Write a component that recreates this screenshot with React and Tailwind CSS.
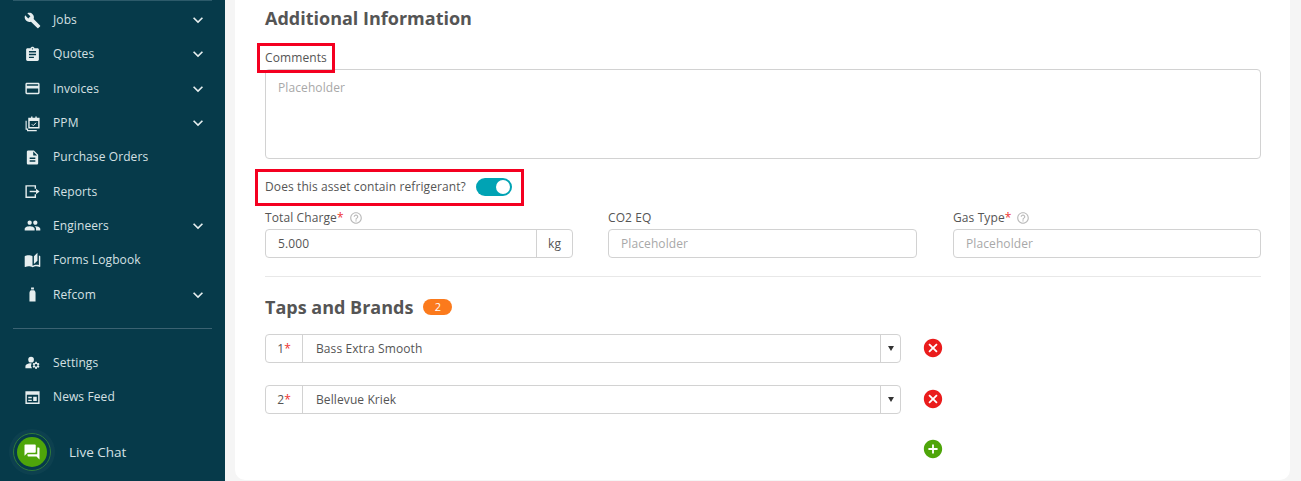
import React from 'react';
import {
  MdBuild,
  MdAssignment,
  MdOutlineCreditCard,
  MdDescription,
  MdPeople,
  MdAutoStories,
  MdManageAccounts,
  MdForum,
  MdHelpOutline,
  MdCancel,
  MdAddCircle,
  MdKeyboardArrowDown,
} from 'react-icons/md';

const PpmIcon = ({ className }) => (
  <svg viewBox="0 0 24 24" className={className} fill="none" stroke="currentColor" strokeWidth="2">
    <path d="M3 8v12h2v2h13" strokeWidth="1.6" />
    <path d="M7 5h14v13H7z" />
    <path d="M7 7h14" strokeWidth="3" />
    <path d="M11 2v3M17 2v3" />
    <path d="M11 13l2 2 4-4" strokeWidth="1.4" />
  </svg>
);

const BottleIcon = ({ className }) => (
  <svg viewBox="0 0 24 24" className={className} fill="currentColor">
    <path d="M10 2h4v3h-4zM9.5 6h5c1.2 1 1.8 2.2 1.8 3.5V22H7.7V9.5C7.7 8.2 8.3 7 9.5 6z" />
  </svg>
);

const ReportsIcon = ({ className }) => (
  <svg viewBox="0 0 24 24" className={className} fill="none" stroke="currentColor" strokeWidth="2">
    <path d="M16 8V4H3v16h13v-4" />
    <path d="M8 12h10" />
    <path d="M17 8l5 4-5 4z" fill="currentColor" stroke="none" />
  </svg>
);

const NewsIcon = ({ className }) => (
  <svg viewBox="0 0 24 24" className={className} fill="currentColor">
    <path d="M2 3h20v18H2zM4 8v11h16V8z" fillRule="evenodd" />
    <path d="M6 11h5v2H6zM6 15h5v2H6zM13 11h5v6h-5z" />
  </svg>
);

const navItems = [
  { label: 'Jobs', icon: MdBuild, arrow: true },
  { label: 'Quotes', icon: MdAssignment, arrow: true },
  { label: 'Invoices', icon: MdOutlineCreditCard, arrow: true },
  { label: 'PPM', icon: PpmIcon, arrow: true },
  { label: 'Purchase Orders', icon: MdDescription },
  { label: 'Reports', icon: ReportsIcon },
  { label: 'Engineers', icon: MdPeople, arrow: true },
  { label: 'Forms Logbook', icon: MdAutoStories },
  { label: 'Refcom', icon: BottleIcon, arrow: true },
];

const NavRow = ({ item }) => {
  const Icon = item.icon;
  return (
    <div className="flex h-[34.3px] items-center pl-[24px] pr-[17px] text-[12px] tracking-[0.1px] text-[#d5e0e3]">
      <Icon className="h-[17px] w-[17px] shrink-0 text-[#e6eeef]" />
      <span className="ml-[12px] flex-1">{item.label}</span>
      {item.arrow && <MdKeyboardArrowDown className="h-[20px] w-[20px] text-[#e6eeef]" />}
    </div>
  );
};

const Sidebar = () => (
  <aside className="flex h-full w-[225px] shrink-0 flex-col bg-[#063a4a]">
    <div className="mx-[13px] h-px bg-[#2c5a6a]" />
    <div className="mt-[2px]">
      {navItems.map((item) => (
        <NavRow key={item.label} item={item} />
      ))}
    </div>
    <div className="mx-[13px] mt-[16px] h-px bg-[#3b6272]" />
    <div className="mt-[17px]">
      <NavRow item={{ label: 'Settings', icon: MdManageAccounts }} />
      <NavRow item={{ label: 'News Feed', icon: NewsIcon }} />
    </div>
    <div className="mt-[19px] flex items-center pl-[13px]">
      <div className="flex h-[38px] w-[38px] items-center justify-center rounded-full border border-[#2f7a3a] bg-[#063a4a] shadow-[0_0_0_4px_rgba(255,255,255,0.03)]">
        <div className="flex h-[30px] w-[30px] items-center justify-center rounded-full bg-[#4ea50a]">
          <MdForum className="h-[18px] w-[18px] text-white" />
        </div>
      </div>
      <span className="ml-[18px] text-[13.5px] font-medium text-[#d5e0e3]">Live Chat</span>
    </div>
  </aside>
);

const Label = ({ children, required, help }) => (
  <div className="flex h-[20px] items-center text-[12px] tracking-[0.1px] text-[#555]">
    <span>{children}</span>
    {required && <span className="text-[#ee3333]">*</span>}
    {help && <MdHelpOutline className="ml-[5px] h-[14px] w-[14px] text-[#bbb]" />}
  </div>
);

const inputBox = 'flex h-[29px] items-center rounded-[4px] border border-[#d2d2d2] bg-white text-[12px] tracking-[0.1px]';

const PlaceholderInput = () => (
  <div className={`${inputBox} px-[12px] text-[#a8a8a8]`}>Placeholder</div>
);

const TapRow = ({ num, brand }) => (
  <div className="flex items-center">
    <div className={`${inputBox} w-[636px] text-[#555]`}>
      <div className="flex h-full w-[37px] items-center justify-center border-r border-[#d2d2d2]">
        {num}
        <span className="text-[#ee3333]">*</span>
      </div>
      <div className="flex-1 pl-[13px]">{brand}</div>
      <div className="flex h-full w-[20px] items-center justify-center border-l border-[#d2d2d2] text-[#333]">
        <span className="h-0 w-0 border-x-[3px] border-t-[5px] border-x-transparent border-t-[#333]" />
      </div>
    </div>
    <MdCancel className="mb-[2px] ml-[21px] h-[22px] w-[22px] text-[#ea1c1c]" />
  </div>
);

export default function App() {
  return (
    <div
      className="flex h-[481px] w-[1301px] overflow-hidden bg-[#f5f5f5]"
      style={{ fontFamily: '"Open Sans", sans-serif' }}
    >
      <Sidebar />
      <div className="ml-[10px] h-[480px] w-[1055px] rounded-br-[10px] rounded-bl-[10px] bg-white pl-[30px] pr-[29px]">
        <h2 className="mt-[7px] h-[22px] text-[18px] font-bold leading-[22px] text-[#555]">
          Additional Information
        </h2>

        <div className="relative mt-[19px] w-fit">
          <Label>Comments</Label>
          <div className="absolute -left-[8px] -top-[5px] h-[30px] w-[78px] border-[3px] border-[#f40020]" />
        </div>
        <div className="mt-[1px] h-[90px] rounded-[4px] border border-[#d2d2d2] px-[12px] py-[9px] text-[12px] tracking-[0.1px] text-[#a8a8a8]">
          Placeholder
        </div>

        <div className="relative mt-[18px] flex h-[20px] w-fit items-center text-[12px] tracking-[0.1px] text-[#555]">
          <span>Does this asset contain refrigerant?</span>
          <div className="ml-[10px] flex h-[18px] w-[36px] items-center justify-end rounded-full bg-[#00a3b4] pr-[2px]">
            <div className="h-[14px] w-[14px] rounded-full bg-white" />
          </div>
          <div className="absolute -left-[10px] -top-[8px] h-[37px] w-[269px] border-[3px] border-[#f40020]" />
        </div>

        <div className="mt-[11px] flex">
          <div className="w-[308px]">
            <Label required help>Total Charge</Label>
            <div className={`${inputBox} mt-[1px] text-[#555]`}>
              <span className="flex-1 pl-[12px]">5.000</span>
              <span className="flex h-full w-[36px] items-center justify-center border-l border-[#d2d2d2]">kg</span>
            </div>
          </div>
          <div className="ml-[35px] w-[309px]">
            <Label>CO2 EQ</Label>
            <div className="mt-[1px]"><PlaceholderInput /></div>
          </div>
          <div className="ml-[36px] w-[308px]">
            <Label required help>Gas Type</Label>
            <div className="mt-[1px]"><PlaceholderInput /></div>
          </div>
        </div>

        <div className="mt-[18px] h-px bg-[#e8e8e8]" />

        <div className="mt-[19px] flex h-[22px] items-center">
          <h2 className="text-[18px] font-bold text-[#555]">Taps and Brands</h2>
          <span className="ml-[10px] flex h-[16px] w-[29px] items-center justify-center rounded-full bg-[#fb7a1c] text-[11px] text-white">
            2
          </span>
        </div>

        <div className="mt-[16px] flex flex-col gap-[22px]">
          <TapRow num="1" brand="Bass Extra Smooth" />
          <TapRow num="2" brand="Bellevue Kriek" />
        </div>

        <div className="mt-[24px] pl-[657px]">
          <MdAddCircle className="h-[22px] w-[22px] text-[#4ea50a]" />
        </div>
      </div>
    </div>
  );
}
